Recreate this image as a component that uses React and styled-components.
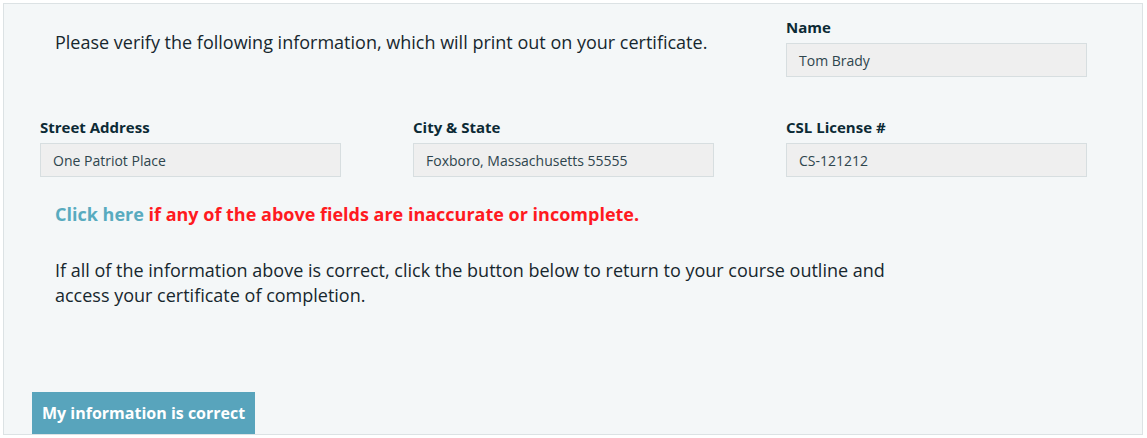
import React from "react";
import styled, { createGlobalStyle } from "styled-components";

const GlobalStyle = createGlobalStyle`
  html, body {
    margin: 0;
    padding: 0;
    background: #ffffff;
  }
  body {
    font-family: "Open Sans", "Noto Sans", sans-serif;
    -webkit-font-smoothing: antialiased;
  }
`;

const Panel = styled.section`
  box-sizing: border-box;
  margin: 3px 0 0 3px;
  width: 1140px;
  height: 432px;
  background-color: #f4f7f8;
  border: 1px solid #dce2e4;
  padding: 13px 0 0 36px;
  position: relative;
  overflow: hidden;
`;

const Grid = styled.div`
  display: grid;
  grid-template-columns: repeat(3, 301px);
  column-gap: 72px;
  row-gap: 40px;
`;

const Intro = styled.p`
  grid-column: span 2;
  margin: 0;
  padding: 14px 0 0 15px;
  font-size: 18px;
  line-height: 22px;
  color: #17272e;
`;

const Field = styled.div`
  display: flex;
  flex-direction: column;
`;

const Label = styled.label`
  font-size: 15px;
  font-weight: 700;
  line-height: 20px;
  color: #0c2a35;
  margin-bottom: 6px;
`;

const Input = styled.div`
  box-sizing: border-box;
  height: 34px;
  padding: 0 12px;
  display: flex;
  align-items: center;
  background-color: #efefef;
  border: 1px solid #d7dee0;
  font-size: 14px;
  color: #2e454d;
`;

const Notice = styled.p`
  margin: 25px 0 0 15px;
  font-size: 18px;
  font-weight: 700;
  line-height: 24px;
  color: #ff1a1f;
`;

const Link = styled.a`
  color: #58abbf;
  text-decoration: none;
  cursor: pointer;
`;

const Body = styled.p`
  margin: 32px 0 0 15px;
  max-width: 840px;
  font-size: 18px;
  line-height: 25px;
  color: #17272e;
`;

const Button = styled.button`
  position: absolute;
  left: 28px;
  bottom: -2px;
  height: 44px;
  padding: 0 10px 2px;
  border: none;
  background-color: #58a4bc;
  color: #ffffff;
  font-family: "Open Sans", "Noto Sans", sans-serif;
  font-size: 16px;
  font-weight: 700;
  cursor: pointer;
`;

const FieldBox = ({ label, value }) => (
  <Field>
    <Label>{label}</Label>
    <Input>{value}</Input>
  </Field>
);

const App = () => {
  return (
    <>
      <GlobalStyle />
      <Panel>
        <Grid>
          <Intro>
            Please verify the following information, which will print out on
            your certificate.
          </Intro>
          <FieldBox label="Name" value="Tom Brady" />
          <FieldBox label="Street Address" value="One Patriot Place" />
          <FieldBox label="City & State" value="Foxboro, Massachusetts 55555" />
          <FieldBox label="CSL License #" value="CS-121212" />
        </Grid>
        <Notice>
          <Link>Click here</Link> if any of the above fields are inaccurate or
          incomplete.
        </Notice>
        <Body>
          If all of the information above is correct, click the button below
          to return to your course outline and access your certificate of
          completion.
        </Body>
        <Button>My information is correct</Button>
      </Panel>
    </>
  );
};

export default App;
